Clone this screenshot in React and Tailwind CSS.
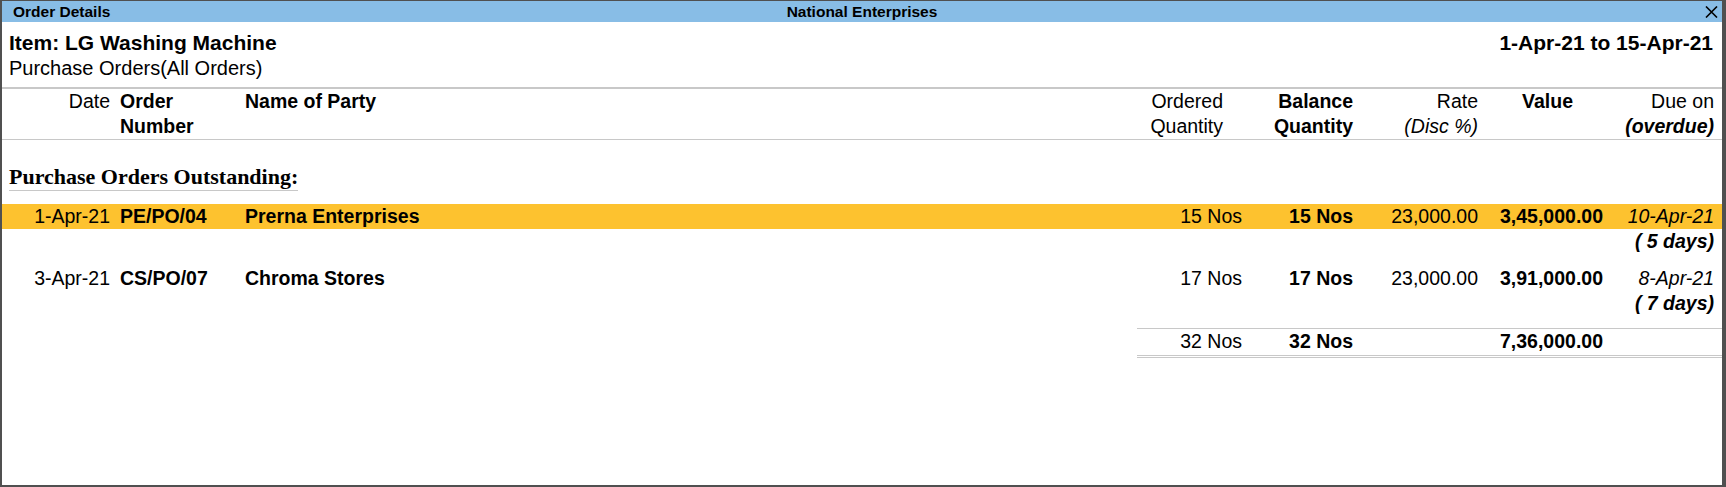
import React from "react";

const orders = [
  {
    date: "1-Apr-21",
    number: "PE/PO/04",
    party: "Prerna Enterprises",
    ordered: "15 Nos",
    balance: "15 Nos",
    rate: "23,000.00",
    value: "3,45,000.00",
    due: "10-Apr-21",
    overdue: "( 5 days)",
    active: true,
  },
  {
    date: "3-Apr-21",
    number: "CS/PO/07",
    party: "Chroma Stores",
    ordered: "17 Nos",
    balance: "17 Nos",
    rate: "23,000.00",
    value: "3,91,000.00",
    due: "8-Apr-21",
    overdue: "( 7 days)",
  },
];

// shared column layout for header, rows and totals
const cols = "grid grid-cols-[118px_125px_1fr_105px_111px_125px_125px_111px] pr-[8px]";

const CloseIcon = () => (
  <svg width="13" height="12" viewBox="0 0 13 12" className="block">
    <path d="M1 0.5L12 11.5M12 0.5L1 11.5" stroke="#000" strokeWidth="1.6" />
  </svg>
);

const OrderRow = ({ order }) => (
  <div className="pb-[12px]">
    <div className={`${cols} h-[25px] leading-[25px] ${order.active ? "bg-[#fdc22f]" : ""}`}>
      <div className="text-right pr-[10px]">{order.date}</div>
      <div className="font-bold">{order.number}</div>
      <div className="font-bold">{order.party}</div>
      <div className="text-right">{order.ordered}</div>
      <div className="text-right font-bold">{order.balance}</div>
      <div className="text-right">{order.rate}</div>
      <div className="text-right font-bold">{order.value}</div>
      <div className="text-right italic">{order.due}</div>
    </div>
    <div className={`${cols} h-[25px] leading-[25px]`}>
      <div className="col-start-8 text-right font-bold italic">{order.overdue}</div>
    </div>
  </div>
);

export default function App() {
  return (
    <div className="w-[1726px] h-[487px] bg-white border-t border-l-2 border-r-4 border-b-2 border-[#505050] flex flex-col text-black font-['Liberation_Sans',Arial,sans-serif] overflow-hidden">
      {/* Title bar */}
      <div className="h-[21px] shrink-0 bg-[#88bde6] grid grid-cols-[1fr_auto_1fr] items-center text-[15.5px] leading-[21px] font-bold">
        <div className="pl-[11px]">Order Details</div>
        <div>National Enterprises</div>
        <div className="flex justify-end pr-[4px]">
          <CloseIcon />
        </div>
      </div>

      {/* Report heading */}
      <div className="pt-[8px] px-[7px] pr-[9px]">
        <div className="flex justify-between text-[21px] leading-[26px] font-bold">
          <span>Item: LG Washing Machine</span>
          <span>1-Apr-21 to 15-Apr-21</span>
        </div>
        <div className="text-[20px] leading-[25px]">Purchase Orders(All Orders)</div>
      </div>

      {/* Column headings */}
      <div className={`${cols} mt-[6px] border-t-2 border-b border-[#c8c8c8] text-[19.5px] leading-[25px]`}>
        <div className="text-right pr-[10px]">Date</div>
        <div className="font-bold">
          Order
          <br />
          Number
        </div>
        <div className="font-bold">Name of Party</div>
        <div className="text-right pr-[19px]">
          Ordered
          <br />
          Quantity
        </div>
        <div className="text-right font-bold">
          Balance
          <br />
          Quantity
        </div>
        <div className="text-right">
          Rate
          <br />
          <span className="italic">(Disc %)</span>
        </div>
        <div className="text-right font-bold pr-[30px]">Value</div>
        <div className="text-right">
          Due on
          <br />
          <span className="font-bold italic">(overdue)</span>
        </div>
      </div>

      {/* Section title */}
      <div className="mt-[24px] pl-[7px]">
        <span className="inline-block font-['Liberation_Serif','Times_New_Roman',serif] font-bold text-[22px] leading-[26px] border-b border-[#c8c8c8]">
          Purchase Orders Outstanding:
        </span>
      </div>

      {/* Order lines */}
      <div className="mt-[13px] text-[19.5px]">
        {orders.map((o) => (
          <OrderRow key={o.number} order={o} />
        ))}
      </div>

      {/* Totals */}
      <div className="flex justify-end text-[19.5px]">
        <div className="w-[585px] border-t border-b-[3px] border-double border-[#c8c8c8] [border-top-style:solid] grid grid-cols-[105px_111px_125px_125px_111px] pr-[8px] pb-[1px] leading-[25px]">
          <div className="text-right">32 Nos</div>
          <div className="text-right font-bold">32 Nos</div>
          <div></div>
          <div className="text-right font-bold">7,36,000.00</div>
          <div></div>
        </div>
      </div>
    </div>
  );
}
